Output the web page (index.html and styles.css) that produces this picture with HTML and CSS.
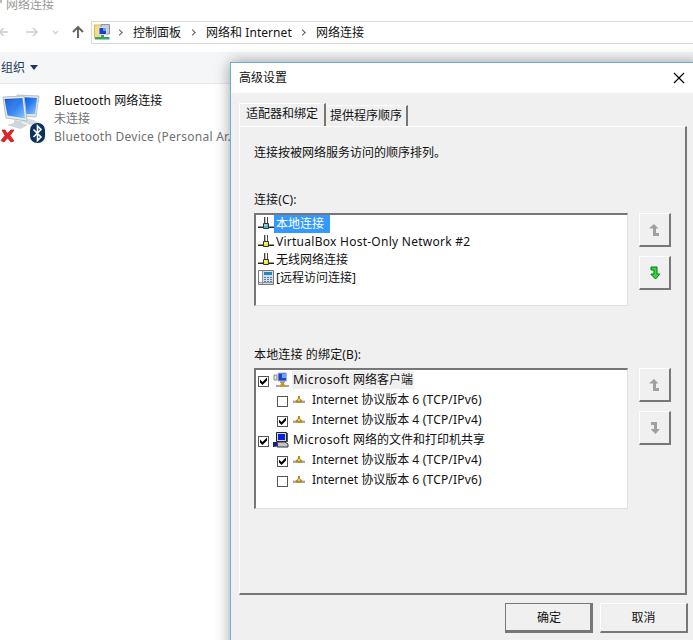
FILE: index.html
```html
<!DOCTYPE html>
<html lang="zh-CN">
<head>
<meta charset="utf-8">
<title>网络连接</title>
<link rel="stylesheet" href="styles.css">
</head>
<body>
<svg class="defs" width="0" height="0" aria-hidden="true">
  <defs>
    <symbol id="up" viewBox="0 0 12 14"><path d="M5 1 9.500 5.500H7V10H10V13H4V5.500H.5V5Z"/></symbol>
    <symbol id="down" viewBox="0 0 12 14"><path d="M2 1H8V8H10.500V8.500L6.500 13 2 8.500V8H5V4H2Z"/></symbol>
    <symbol id="net" viewBox="0 0 16 16">
      <path d="M6.500 1V9M9.500 1V9" stroke="#444" fill="none"/><path d="M7.500 1V9" stroke="#bbb"/>
      <path d="M0 10.500H5M11 10.500H16" stroke="#999"/>
      <path d="M0 11.500H5M11 11.500H16" stroke="#222"/>
      <path class="plug" d="M5.500 7.500H10.500V12.500H5.500Z" stroke="#333"/>
      <path d="M6 9H9" stroke="#fff" opacity=".7"/>
    </symbol>
    <symbol id="proto" viewBox="0 0 12 8">
      <path d="M0 5H12V7H0Z" fill="#aaa69a"/><path d="M0 4.500H12" stroke="#d9d6cb"/><path d="M5 0H7V2.500L9 4.500V6.500H3V4.500L5 2.500Z" fill="#b78b1d"/><path d="M5 3H7V5H5Z" fill="#eccb60"/>
    </symbol>
    <symbol id="tick" viewBox="0 0 9 9"><path d="M1 2.500V5.500L3.500 8 8 3.500V.5L3.500 5Z" fill="#000"/></symbol>
    <linearGradient id="blue" x2="1" y2="1"><stop stop-color="#0646c4"/><stop offset=".5" stop-color="#2d7ef0"/><stop offset="1" stop-color="#8ac8ff"/></linearGradient>
  </defs>
</svg>

<main class="explorer">
  <div class="caption"><i class="caption-mark"></i>网络连接</div>
  <nav class="nav">
    <svg class="arrows" width="91" height="22" viewBox="0 0 91 22" fill="none">
      <path d="M0 11H8M3.500 7 0 11 3.500 15M26 11H37M33 7 37 11 33 15" stroke="#d0d0d0" stroke-width="1.500"/>
      <path d="M53 10 55.500 12.500 58 10" stroke="#d0d0d0" stroke-width="1.300"/>
      <path d="M78 17V6M73 11 78 6 83 11" stroke="#606060" stroke-width="1.900"/>
    </svg>
    <div class="address">
      <svg class="folder" width="16" height="17" viewBox="0 0 16 17">
        <path d="M.5 1H8V14H.5Z" fill="#f5df7c" stroke="#dfb950"/>
        <path d="M7 .5H15.500V10H7Z" fill="#c5ccd8" stroke="#8995a8"/>
        <path d="M5 3.500H12.500V10.500H5Z" fill="#1f3bc4" stroke="#d6dde9"/>
        <path d="M9 4H12V7H9Z" fill="#659bff"/>
        <path d="M7 11H10V13H15.500V15.500H1V13H7Z" fill="#38a36a"/>
      </svg>
      <b class="sep"></b><span class="c1">控制面板</span>
      <b class="sep s2"></b><span class="c2">网络和 <em>Internet</em></span>
      <b class="sep s3"></b><span class="c3">网络连接</span>
    </div>
  </nav>
  <div class="command">组织<i class="caret"></i></div>
  <section class="connection">
    <svg class="computer" width="48" height="52" viewBox="0 0 48 52">
      <path d="M17 3 39 4 36 25 17 24Z" fill="#dce4e9" stroke="#bbc4ca"/>
      <path d="M20 5 37 6 35 22 20 22Z" fill="url(#blue)"/>
      <path d="M24 26 34 28 39 31 30 33 20 29Z" fill="#d7dcdf"/>
      <path d="M3 5 24 4 27 29 6 26Z" fill="#e9edef" stroke="#b6bec4"/>
      <path d="M4.500 7 22.500 6 25 26.500 7.500 23.500Z" fill="url(#blue)"/>
      <path d="M5 8 20 7Q15 12 13 24L8 23Z" fill="#4e96f0" opacity=".35"/>
      <path d="M14 28 21 29 22 31 28 33 20 37 7 33 14 31Z" fill="#cfd5d8"/>
      <path d="M2 38 5 38 7.500 41.500 11 38 14 38 10 43.500 14 49 11 50 7.500 46 4 50 1 48.500 5 43.500Z" fill="#e52427" stroke="#b30f15" stroke-width=".7"/>
      <rect x="30" y="31" width="15" height="20" rx="7" fill="#0b3160"/>
      <path d="M33.500 37.500 41 45 37.500 48.500V34L41 37.500 33.500 45" fill="none" stroke="#fff" stroke-width="1.600"/>
    </svg>
    <div class="details">
      <p class="name"><em>Bluetooth</em> 网络连接</p>
      <p>未连接</p>
      <p class="device">Bluetooth Device (Personal Ar.</p>
    </div>
  </section>
</main>

<section class="dialog">
  <header class="dialog-title"><span>高级设置</span>
    <svg width="12" height="12" viewBox="0 0 12 12"><path d="M1 1 11 11M11 1 1 11" stroke="#000" stroke-width="1.200"/></svg>
  </header>
  <div class="tabs"><span class="tab active">适配器和绑定</span><span class="tab">提供程序顺序</span></div>
  <div class="panel">
    <p class="hint">连接按被网络服务访问的顺序排列。</p>
    <p class="label l1">连接(C):</p>
    <div class="row">
      <ul class="box first">
        <li><svg class="ico cyan"><use href="#net"/></svg><span class="selected">本地连接</span></li>
        <li><svg class="ico"><use href="#net"/></svg><span class="vbox">VirtualBox Host-Only Network #2</span></li>
        <li><svg class="ico"><use href="#net"/></svg><span>无线网络连接</span></li>
        <li><svg class="ico" viewBox="0 0 16 16"><path d="M.5 .5H15.500V14.500H.5Z" fill="#d9dce1" stroke="#777"/><path d="M1 1H4V12H1Z" fill="#fff"/><path d="M6 2H14V5H6Z" fill="#2386c0"/><path d="M6 7.500H8M9 7.500H11M12 7.500H14M6 9.500H8M9 9.500H11M12 9.500H14M6 11.500H8M9 11.500H11M12 11.500H14" stroke="#4b85b4"/><path d="M4.500 1V14M1 12.500H15" stroke="#8d939b"/></svg><span>[远程访问连接]</span></li>
      </ul>
      <div class="movers">
        <button><svg><use href="#up"/></svg></button>
        <button class="green"><svg><use href="#down"/></svg></button>
      </div>
    </div>
    <p class="label l2">本地连接 的绑定(B):</p>
    <div class="row">
      <ul class="box second">
        <li><i class="check"><svg><use href="#tick"/></svg></i><svg class="ico" viewBox="0 0 16 16"><path d="M1 3H4V8H1Z" fill="#dfe7d5" stroke="#87917f"/><path d="M5 1H13.500V9H5Z" fill="#1d42d0" stroke="#a5b8dc"/><path d="M9 2H13V6H9Z" fill="#73a7ff"/><path d="M7 9H12V11H7Z" fill="#aaa"/><path d="M3 13H16V15H3Z" fill="#aaa49a"/><path d="M8 10H11V12L12 13V15H7V13L8 12Z" fill="#cb951e"/></svg><span class="focused"><em class="ms">Microsoft</em> 网络客户端</span></li>
        <li class="child"><i class="check"></i><svg class="proto"><use href="#proto"/></svg><span><em>Internet</em> 协议版本 <em class="tcp">6 (TCP/IPv6)</em></span></li>
        <li class="child"><i class="check"><svg><use href="#tick"/></svg></i><svg class="proto"><use href="#proto"/></svg><span><em>Internet</em> 协议版本 <em class="tcp">4 (TCP/IPv4)</em></span></li>
        <li><i class="check"><svg><use href="#tick"/></svg></i><svg class="ico" viewBox="0 0 16 16"><path d="M3.500.5H13.500V9.500H3.500Z" fill="#d4d4dc" stroke="#222"/><path d="M5 2H12V8H5Z" fill="#0b20db"/><path d="M14.500 1V10" stroke="#555"/><path d="M5 10H12L15 12V15H4V12Z" fill="#c4c4cd" stroke="#333"/><path d="M0 10H4L5 14 1 15H0Z" fill="#14207c"/></svg><span><em class="ms">Microsoft</em> 网络的文件和打印机共享</span></li>
        <li class="child"><i class="check"><svg><use href="#tick"/></svg></i><svg class="proto"><use href="#proto"/></svg><span><em>Internet</em> 协议版本 <em class="tcp">4 (TCP/IPv4)</em></span></li>
        <li class="child"><i class="check"></i><svg class="proto"><use href="#proto"/></svg><span><em>Internet</em> 协议版本 <em class="tcp">6 (TCP/IPv6)</em></span></li>
      </ul>
      <div class="movers">
        <button><svg><use href="#up"/></svg></button>
        <button><svg><use href="#down"/></svg></button>
      </div>
    </div>
  </div>
  <footer><button class="ok">确定</button><button>取消</button></footer>
</section>
</body>
</html>
```
FILE: styles.css
```css
* { box-sizing: border-box; }
body {
  margin: 0; width: 693px; height: 640px; overflow: hidden; position: relative;
  background: #fff; color: #111;
  font: 12px/18px "Noto Sans", "Noto Sans CJK SC", sans-serif;
}
p, ul { margin: 0; padding: 0; list-style: none; }
em { font-style: normal; }
span, p { white-space: nowrap; }
svg { flex: none; display: block; }
.defs { position: absolute; }

.caption { height: 21px; line-height: 9px; padding-left: 6px; color: #999; display: flex; }
.caption-mark { width: 2px; height: 3px; margin-left: -6px; margin-right: 4px; background: #bbb; }
.nav { display: flex; height: 23px; }
.address { flex: 1; height: 23px; border: 1px solid #d9d9d9; border-right: 0; display: flex; align-items: center; padding-left: 2px; }
.sep { width: 5px; height: 5px; border: solid #555; border-width: 1.500px 1.500px 0 0; transform: rotate(45deg) scale(.9); margin: 0 11px 0 7px; }
.address span { width: 48px; }
.address .c2 { width: 86px; letter-spacing: .05px; }
.s2, .s3 { margin-left: 9px; }
.s3 { margin-left: 8px; }
.command { margin-top: 8px; height: 32px; background: #f5f6f7; border-bottom: 1px solid #e6e8ea; color: #1e395b; padding-left: 1px; display: flex; align-items: center; }
.caret { border: 4px solid transparent; border-top: 5px solid #1e395b; border-bottom: 0; margin-left: 5px; }
.connection { display: flex; padding-top: 8px; }
.details { padding-left: 6px; color: #707070; }
.name { color: #111; }
.name em { letter-spacing: .15px; }
.device { letter-spacing: .27px; }

.dialog { position: absolute; left: 230px; top: 62px; width: 470px; height: 600px; background: #f0f0f0; border: 1px solid #69b0d1; box-shadow: 0 0 14px rgba(0,0,0,.38); }
.dialog-title { height: 30px; background: #fff; display: flex; justify-content: space-between; align-items: center; padding: 0 14px 0 8px; }
.tabs { height: 33px; padding: 10px 0 0 8px; display: flex; align-items: flex-end; }
.tab { width: 82px; height: 21px; line-height: 20px; padding-left: 4px; border-top: 1px solid #fff; border-right: 2px solid #777; }
.tab.active { width: 87px; height: 23px; padding-left: 6px; border-left: 1px solid #fff; }
.panel { margin-left: 8px; width: 448px; height: 469px; border: 1px solid #fff; border-right: 2px solid #777; border-bottom: 2px solid #777; padding: 16px 0 0 14px; }
.hint, .label { height: 18px; line-height: 20px; }
.l1 { margin-top: 29px; margin-bottom: 5px; letter-spacing: .1px; }
.l2 { margin-top: 39px; margin-bottom: 5px; letter-spacing: .15px; }
.row { display: flex; gap: 11px; }
.box { width: 374px; background: #fff; border: 2px solid #777; border-right: 1px solid #e0e0e0; border-bottom: 1px solid #e0e0e0; }
.first { height: 93px; }
.second { height: 141px; }
.box li { display: flex; align-items: center; }
.first li { height: 18px; padding-left: 2px; }
.ico { width: 16px; height: 16px; }
.plug { fill: var(--plug, #f0ea2a); }
.cyan { --plug: #50b8d0; }
.first span { padding-left: 2px; }
.first .selected { background: #3399ff; color: #fff; padding-right: 6px; }
.first .vbox { letter-spacing: .26px; }
.second li { height: 20px; padding-left: 2px; }
.second .child { padding-left: 21px; }
.check { width: 11px; height: 11px; border: 1px solid #555; margin-top: 3px; flex: none; }
.check svg { width: 9px; height: 9px; }
.second .ico { margin-left: 4px; }
.second li > span { padding-left: 4px; }
.second .child > span { padding-left: 5px; }
.second .focused { background: #f0f0f0; margin-left: 3px; padding: 0 1px; }
.second li > .focused { padding-left: 1px; }
.ms { letter-spacing: .4px; }
.tcp { letter-spacing: .2px; }
.proto { width: 12px; height: 8px; margin: 0 2px 0 5px; }
.movers { display: flex; flex-direction: column; gap: 9px; }
button { font: inherit; color: #111; background: #f0f0f0; padding: 0; border: 1px solid #fff; border-right: 2px solid #777; border-bottom: 2px solid #777; display: flex; align-items: center; justify-content: center; }
.movers button { width: 32px; height: 34px; }
.movers svg { width: 12px; height: 14px; fill: #a0a0a0; }
.movers .green svg { fill: #2ddb3b; stroke: #08780d; stroke-width: 1; }
footer { display: flex; gap: 7px; padding: 8px 0 0 274px; }
footer button { width: 88px; height: 30px; padding-top: 1px; }
footer .ok { border: 1px solid #777; border-right: 3px solid #777; border-bottom: 3px solid #777; padding: 2px 0 0 2px; }
```
